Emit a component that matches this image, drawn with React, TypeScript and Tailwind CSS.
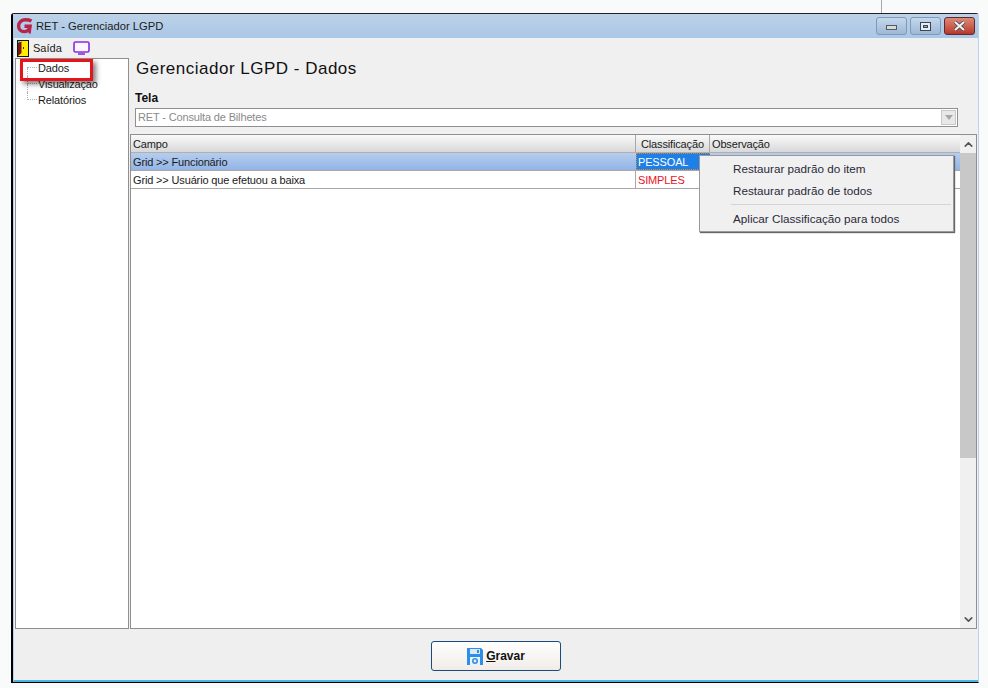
import { ChevronDown, ChevronUp } from 'lucide-react';

const font = { fontFamily: '"Liberation Sans", Arial, sans-serif' };

const Logo = () => (
  <svg width="17" height="16" viewBox="0 0 17 16" fill="none">
    <path d="M15.5 3 C13.5 2 11.5 1.8 9.5 1.8 C5.5 1.8 2.6 4.4 2.6 8 C2.6 11.4 5 13.6 8.2 13.6 C10.6 13.6 12.4 12.6 13.2 10.6 L13.8 8.2 L8.5 8.2" stroke="#b8244a" strokeWidth="3.4" />
    <path d="M14.6 7 L13.6 15.5" stroke="#b8244a" strokeWidth="2.4" />
  </svg>
);

const DoorIcon = () => (
  <svg width="12" height="17" viewBox="0 0 12 17">
    <rect x="0" y="0" width="12" height="17" fill="#141414" />
    <rect x="1" y="1" width="10" height="15" fill="#ffee00" />
    <rect x="1" y="1" width="2" height="2" fill="#38c8d8" />
    <path d="M1 3 L4.5 1.5 L4.5 13 L1 16 Z" fill="#7a1414" />
    <rect x="6" y="7" width="1" height="2" fill="#7a1414" />
  </svg>
);

const MonitorIcon = () => (
  <svg width="17" height="14" viewBox="0 0 17 14" fill="none">
    <rect x="1" y="1" width="15" height="10" rx="1.5" stroke="#8a2be2" strokeWidth="1.6" fill="#faf7ff" />
    <path d="M5 13 H12" stroke="#8a2be2" strokeWidth="1.6" />
  </svg>
);

const SaveIcon = () => (
  <svg width="16" height="17" viewBox="0 0 16 17">
    <path d="M0 0 H14 L16 2 V17 H0 Z" fill="#2d8fe8" />
    <rect x="3" y="1" width="10" height="5" fill="#dceaf8" />
    <rect x="10" y="2" width="2" height="3" fill="#2d8fe8" />
    <rect x="3" y="9" width="10" height="8" fill="#e8f2fb" />
    <circle cx="8" cy="13" r="2.2" fill="none" stroke="#2d8fe8" strokeWidth="1.6" />
  </svg>
);

const TitleButtons = () => (
  <div className="flex gap-[3px] pt-[3px]">
    <div className="flex h-[18px] w-[31px] items-center justify-center rounded-[3px] border border-[#7f9ab8] bg-gradient-to-b from-[#c5d8ec] to-[#9db8d6]">
      <div className="mt-[3px] h-[5px] w-[11px] border border-[#4f5a66] bg-[#d8d8d8]" />
    </div>
    <div className="flex h-[18px] w-[31px] items-center justify-center rounded-[3px] border border-[#7f9ab8] bg-gradient-to-b from-[#c5d8ec] to-[#9db8d6]">
      <div className="flex h-[9px] w-[11px] items-center justify-center border border-[#3c4652] bg-[#e4ebf2]">
        <div className="h-[3px] w-[5px] border border-[#3c4652] bg-[#8da6c0]" />
      </div>
    </div>
    <div className="flex h-[18px] w-[31px] items-center justify-center rounded-[3px] border border-[#5c2a30] bg-gradient-to-b from-[#dc8a78] to-[#b8352a]">
      <svg width="13" height="10" viewBox="0 0 13 10">
        <path d="M2 1 L11 9 M11 1 L2 9" stroke="#3c4652" strokeWidth="3.6" />
        <path d="M2 1 L11 9 M11 1 L2 9" stroke="#f2f2f2" strokeWidth="2.2" />
      </svg>
    </div>
  </div>
);

const TreeItem = ({ label, first, last }: { label: string; first?: boolean; last?: boolean }) => (
  <div className="flex h-4 items-center">
    <div className="ml-[11px] flex h-4 w-[10px] flex-col">
      <div className={`h-[8px] border-b border-dotted border-[#b0b0b0] ${first ? '' : 'border-l'}`} />
      <div className={`h-[8px] border-dotted border-[#b0b0b0] ${last ? '' : 'border-l'}`} />
    </div>
    <span className="ml-px text-[11px] tracking-[-0.15px] text-[#1a1a1a]">{label}</span>
  </div>
);

const MenuItem = ({ label, className }: { label: string; className: string }) => (
  <div className={`pl-[33px] text-[11.7px] leading-[16px] text-[#2a2a3a] ${className}`}>{label}</div>
);

export default function App() {
  return (
    <div className="h-[688px] w-[988px] overflow-hidden bg-[#f9fbfa]" style={font}>
      <div className="ml-[881px] h-[13px] w-px bg-[#a8a8a8]" />
      <div className="ml-[11px] flex h-[670px] w-[968px] flex-col rounded-t-[3px] border-t border-r border-b border-l-2 border-t-[#222] border-r-[#b8d2ee] border-b-black border-l-black bg-[#f0f0f0]">
        {/* title bar */}
        <div className="flex h-[24px] shrink-0 justify-between bg-gradient-to-b from-[#bdd2e8] to-[#a9c7e6] pr-[3px]">
          <div className="flex items-center pl-[3px]">
            <Logo />
            <span className="ml-[3px] pt-px text-[11.2px] text-[#1c1c1c]">RET - Gerenciador LGPD</span>
          </div>
          <TitleButtons />
        </div>
        {/* menu bar */}
        <div className="flex h-[20px] shrink-0 items-center border-l border-[#b8d2ee] pl-[3px]">
          <DoorIcon />
          <span className="ml-[4px] text-[11px] text-[#1a1a1a]">Saída</span>
          <div className="ml-[11px]">
            <MonitorIcon />
          </div>
        </div>
        {/* body */}
        <div className="flex min-h-0 flex-1 border-l border-[#b8d2ee] pr-px pl-px">
          <div className="relative h-[571px] w-[114px] shrink-0 border border-[#909090] bg-white pt-px">
            <TreeItem label="Dados" first />
            <TreeItem label="Visualização" />
            <TreeItem label="Relatórios" last />
            <div className="absolute top-0 left-[4px] h-[22px] w-[73px] border-[3px] border-[#e8141c] shadow-[3px_3px_5px_rgba(0,0,0,0.5)]" />
          </div>
          <div className="ml-px flex h-[571px] min-w-0 flex-1 flex-col">
            <div className="pt-[1px] pl-[6px] text-[17px] leading-[20px] tracking-[0.5px] text-[#111]">
              Gerenciador LGPD - Dados
            </div>
            <div className="pt-[12px] pl-[5px] text-[12px] leading-[15px] font-bold text-[#111]">Tela</div>
            <div className="mt-[2px] ml-[5px] flex h-[19px] w-[823px] items-center justify-between border border-[#909090] bg-white pr-px pl-[2px]">
              <span className="text-[11px] tracking-[-0.15px] text-[#8a8a8a]">RET - Consulta de Bilhetes</span>
              <div className="flex h-[15px] w-[15px] items-center justify-center border border-[#c8c8c8] bg-[#e8e8e8]">
                <div className="h-0 w-0 border-x-[4px] border-t-[5px] border-x-transparent border-t-[#a6a6a6]" />
              </div>
            </div>
            {/* grid */}
            <div className="relative mt-[7px] flex min-h-0 flex-1 border border-[#909090] bg-white">
              <div className="min-w-0 flex-1">
                <div className="flex h-[18px] border-b border-[#b0b0b0] bg-gradient-to-b from-[#fafafa] to-[#d8d8d8] text-[11px] leading-[19px] tracking-[-0.15px] text-[#1a1a1a]">
                  <div className="w-[505px] border-r border-[#a8a8a8] pl-[2px]">Campo</div>
                  <div className="w-[74px] border-r border-[#a8a8a8] pl-[5px]">Classificação</div>
                  <div className="flex-1 pl-[2px]">Observação</div>
                </div>
                <div className="flex h-[18px] border-b border-[#a8a8a8] bg-gradient-to-b from-[#b6cdee] to-[#93b4e6] text-[11px] leading-[19px] tracking-[-0.15px] text-[#1a1a1a]">
                  <div className="w-[505px] pl-[2px]">Grid &gt;&gt; Funcionário</div>
                  <div className="w-[74px] border border-dotted border-[#e08a20] bg-[#1f7fe8] pl-[1px] leading-[17px] text-white">PESSOAL</div>
                </div>
                <div className="flex h-[18px] border-b border-[#a8a8a8] text-[11px] leading-[19px] tracking-[-0.15px] text-[#1a1a1a]">
                  <div className="w-[505px] border-r border-[#a8a8a8] pl-[2px]">Grid &gt;&gt; Usuário que efetuou a baixa</div>
                  <div className="w-[74px] border-r border-[#a8a8a8] pl-[2px] text-[#e8141c]">SIMPLES</div>
                </div>
              </div>
              <div className="flex w-[16px] shrink-0 flex-col bg-[#f0f0f0]">
                <div className="flex h-[18px] items-center justify-center">
                  <ChevronUp size={13} strokeWidth={3} className="text-[#555]" />
                </div>
                <div className="h-[305px] bg-[#c8c8c8]" />
                <div className="flex-1" />
                <div className="flex h-[18px] items-center justify-center">
                  <ChevronDown size={13} strokeWidth={3} className="text-[#555]" />
                </div>
              </div>
              <div className="absolute top-[20px] left-[568px] h-[77px] w-[255px] border border-[#9a9a9a] bg-[#f0f0f0] pt-[4px] shadow-[1px_1px_1px_#666]">
                <MenuItem label="Restaurar padrão do item" className="mt-[1px]" />
                <MenuItem label="Restaurar padrão de todos" className="mt-[6px]" />
                <div className="mt-[5px] mr-[2px] ml-[31px] border-t border-[#d4d4d4]" />
                <MenuItem label="Aplicar Classificação para todos" className="mt-[6px]" />
              </div>
            </div>
          </div>
        </div>
        {/* footer */}
        <div className="flex h-[53px] shrink-0 justify-center border-b-2 border-l border-b-[#4cb4e0] border-l-[#b8d2ee] bg-[#efefef] pt-[12px]">
          <button className="flex h-[30px] w-[130px] items-center justify-center rounded-[3px] border border-[#1c4a80] bg-gradient-to-b from-[#ffffff] to-[#f0ece8] text-[12px] font-bold text-[#111]">
            <SaveIcon />
            <span className="ml-[3px]">
              <span className="underline">G</span>ravar
            </span>
          </button>
        </div>
      </div>
    </div>
  );
}
